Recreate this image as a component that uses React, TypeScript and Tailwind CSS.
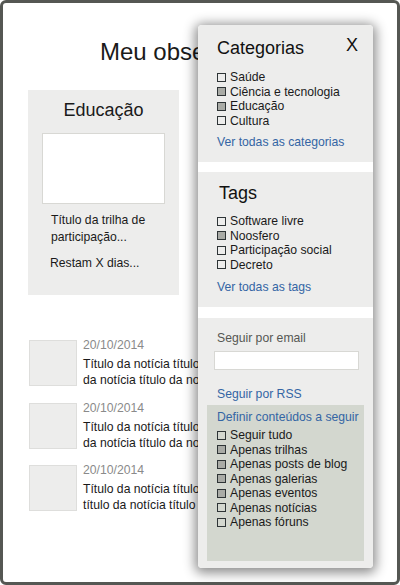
import React from "react"

type Item = { label: string; checked?: boolean }

const categorias: Item[] = [
  { label: "Saúde" },
  { label: "Ciência e tecnologia", checked: true },
  { label: "Educação", checked: true },
  { label: "Cultura" },
]

const tags: Item[] = [
  { label: "Software livre" },
  { label: "Noosfero", checked: true },
  { label: "Participação social" },
  { label: "Decreto" },
]

const conteudos: Item[] = [
  { label: "Seguir tudo" },
  { label: "Apenas trilhas", checked: true },
  { label: "Apenas posts de blog", checked: true },
  { label: "Apenas galerias", checked: true },
  { label: "Apenas eventos", checked: true },
  { label: "Apenas notícias" },
  { label: "Apenas fóruns" },
]

const noticias = [
  ["Título da notícia título da notícia", "da notícia título da notícia título"],
  ["Título da notícia título da notícia", "da notícia título da notícia título"],
  ["Título da notícia título título da", "título da notícia título da notícia"],
]

function CheckList({ items }: { items: Item[] }) {
  return (
    <ul className="flex flex-col">
      {items.map((it) => (
        <li key={it.label} className="flex items-center gap-[4px] h-[14.5px] text-[12.2px] leading-[14.5px] text-[#1a1a1a]">
          <span
            className={
              "w-[9px] h-[9px] border border-[#2e3436] shrink-0 " +
              (it.checked ? "bg-[#a9aba6]" : "bg-transparent")
            }
          />
          <span>{it.label}</span>
        </li>
      ))}
    </ul>
  )
}

function FilterPanel() {
  return (
    <aside className="absolute left-[195px] top-[22px] w-[175px] h-[543px] rounded-[4px] bg-white flex flex-col shadow-[0_2px_12px_3px_rgba(0,0,0,0.45)] overflow-hidden">
      <section className="bg-[#ededec] h-[137px] pl-[19px] pr-[15px] pt-[12px]">
        <div className="flex justify-between items-start">
          <h2 className="text-[18px] leading-[22px] text-[#111]">Categorias</h2>
          <button className="text-[18px] leading-[20px] text-[#111] -mt-[2px]">X</button>
        </div>
        <div className="mt-[11px]">
          <CheckList items={categorias} />
        </div>
        <a className="block mt-[7px] text-[12.2px] leading-[15px] text-[#3465a4]">Ver todas as categorias</a>
      </section>

      <section className="bg-[#ededec] h-[135px] mt-[10px] pl-[19px] pt-[10px]">
        <h2 className="text-[18px] leading-[22px] text-[#111] ml-[2px]">Tags</h2>
        <div className="mt-[10px]">
          <CheckList items={tags} />
        </div>
        <a className="block mt-[8px] text-[12.2px] leading-[15px] text-[#3465a4]">Ver todas as tags</a>
      </section>

      <section className="bg-[#ededec] flex-1 mt-[11px] pt-[13px] px-[9px]">
        <div className="pl-[10px] text-[12.2px] leading-[15px] text-[#555753]">Seguir por email</div>
        <input className="block mt-[5px] ml-[7px] w-[145px] h-[19px] bg-white border border-[#d8d8d4] outline-none" />
        <a className="block mt-[17px] pl-[10px] text-[12.2px] leading-[15px] text-[#3465a4]">Seguir por RSS</a>
        <div className="mt-[3px] h-[156px] bg-[#d3d7cf] pl-[10px] pt-[5px]">
          <div className="text-[12.2px] leading-[15px] text-[#3465a4]">Definir conteúdos a seguir</div>
          <div className="mt-[3px]">
            <CheckList items={conteudos} />
          </div>
        </div>
      </section>
    </aside>
  )
}

export default function App() {
  return (
    <div className="relative w-[400px] h-[585px] bg-white border-[3px] border-[#555753] rounded-[6px] overflow-hidden font-['Liberation_Sans',Arial,sans-serif] text-[#1a1a1a]">
      <h1 className="pt-[35px] pl-[97px] text-[24px] leading-[28px] whitespace-nowrap">Meu observatório</h1>

      <div className="mt-[24px] ml-[25px] w-[151px] h-[205px] bg-[#ededec] pt-[9px] flex flex-col">
        <h3 className="text-center text-[18px] leading-[22px]">Educação</h3>
        <div className="mt-[12px] mx-auto w-[123px] h-[71px] bg-white border border-[#d8d8d4]" />
        <p className="mt-[8px] pl-[23px] text-[12.2px] leading-[17px]">
          Título da trilha de
          <br />
          participação...
        </p>
        <p className="mt-[9px] pl-[22px] text-[12.2px] leading-[17px]">Restam X dias...</p>
      </div>

      <ul className="mt-[45px] ml-[26px] flex flex-col gap-[16.5px]">
        {noticias.map((lines, i) => (
          <li key={i} className="flex gap-[6px] h-[46px]">
            <div className="w-[48px] h-[46px] bg-[#ededec] border border-[#dededc] shrink-0" />
            <div className="-mt-[2px]">
              <div className="text-[12.2px] leading-[14px] text-[#8a8a8a]">20/10/2014</div>
              <div className="mt-[4px] text-[12.2px] leading-[16px] whitespace-nowrap">
                <div>{lines[0]}</div>
                <div>{lines[1]}</div>
              </div>
            </div>
          </li>
        ))}
      </ul>

      <FilterPanel />
    </div>
  )
}
